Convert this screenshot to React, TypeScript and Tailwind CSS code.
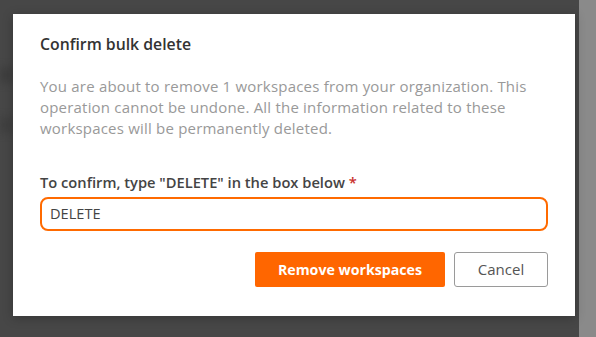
import React from "react";

export default function App() {
  return (
    <div
      className="w-[596px] h-[337px] flex overflow-hidden bg-[#484848]"
      style={{ fontFamily: '"Open Sans", "Liberation Sans", sans-serif' }}
    >
      <div className="relative w-[579px] h-full bg-[#474747] pt-[14px] pl-[13px]">
        <div className="absolute left-0 top-[68px] w-[13px] h-[14px] bg-[#3c3c3c] blur-[4px]" />
        <div className="absolute left-0 top-[118px] w-[13px] h-[14px] bg-[#3e3e3e] blur-[4px]" />
        <div className="relative w-[562px] h-[302px] bg-white px-[27px] pt-[20px] shadow-[0_2px_10px_rgba(0,0,0,0.25)]">
          <h2 className="text-[15.8px] leading-[20px] font-semibold text-[#333]">
            Confirm bulk delete
          </h2>
          <p className="mt-[22px] text-[15px] tracking-[0.2px] leading-[21px] text-[#999] w-[508px]">
            You are about to remove 1 workspaces from your organization. This
            operation cannot be undone. All the information related to these
            workspaces will be permanently deleted.
          </p>
          <label className="block mt-[33px] text-[14.7px] leading-[20px] font-semibold text-[#444]">
            To confirm, type "DELETE" in the box below{" "}
            <span className="text-[#c9302c]">*</span>
          </label>
          <div className="mt-[5px] h-[34px] w-[508px] rounded-[8px] border-2 border-[#ff6a00] flex items-center px-[8px] text-[14.6px] text-[#444]">
            DELETE
          </div>
          <div className="mt-[21px] flex justify-end gap-[9px]">
            <button className="h-[35px] w-[190px] rounded-[2px] bg-[#ff6600] text-white text-[14.2px] font-bold">
              Remove workspaces
            </button>
            <button className="h-[35px] w-[94px] rounded-[3px] border border-[#9a9a9a] bg-white text-[#555] text-[15px]">
              Cancel
            </button>
          </div>
        </div>
      </div>
      <div className="w-[17px] h-full bg-[#8a8a8a]" />
    </div>
  );
}
